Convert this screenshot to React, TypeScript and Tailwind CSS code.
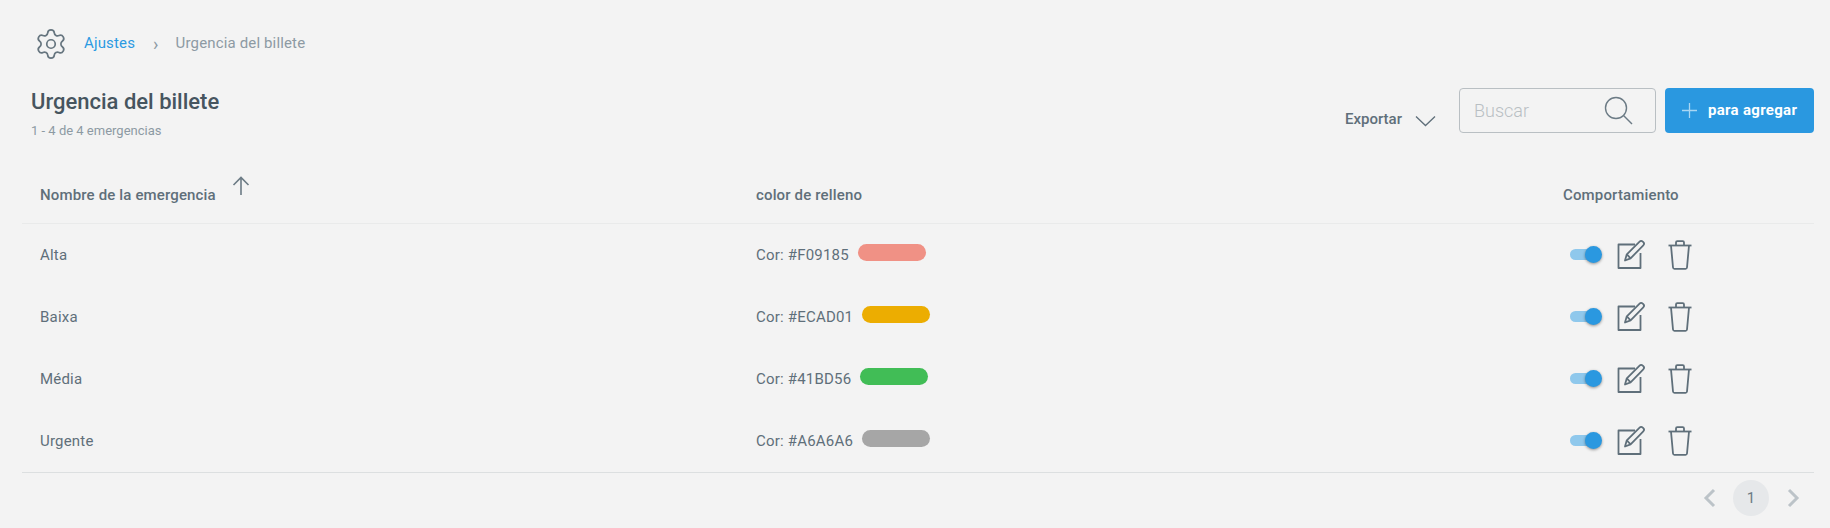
import { Settings } from "lucide-react"

const urgencias = [
  { nombre: "Alta", color: "#F09185" },
  { nombre: "Baixa", color: "#ECAD01" },
  { nombre: "Média", color: "#41BD56" },
  { nombre: "Urgente", color: "#A6A6A6" },
]

function EditIcon() {
  return (
    <svg width="30" height="30" viewBox="0 0 30 30" fill="none" stroke="#5f6f7a" strokeWidth="1.8" strokeLinejoin="round">
      <path d="M18 4.5H1.5v23.5h22V13" />
      <path d="M8 20.5l1.8-6.2L22.6 1.6c.9-.9 2.2-.9 3.1 0l.6.6c.9.9.9 2.2 0 3.1L13.6 18.3z" />
      <path d="M9.8 14.3l3.8 4" />
    </svg>
  )
}

function TrashIcon() {
  return (
    <svg width="24" height="30" viewBox="0 0 24 30" fill="none" stroke="#5f6f7a" strokeWidth="1.8" strokeLinejoin="round">
      <path d="M0.5 5.5h23" />
      <path d="M8 5.5V2.5c0-.8.5-1.3 1.3-1.3h5.4c.8 0 1.3.5 1.3 1.3v3" />
      <path d="M3 5.5l2 22c.1.8.6 1.3 1.4 1.3h11.2c.8 0 1.3-.5 1.4-1.3l2-22" />
    </svg>
  )
}

export default function App() {
  return (
    <div className="w-[1830px] h-[528px] overflow-hidden bg-[#f3f3f3] font-['Roboto',sans-serif] text-[#5f6f7a]">
      {/* Breadcrumb */}
      <div className="flex items-center h-[30px] mt-[28px] ml-[36px] pt-[1px] text-[15px] tracking-[0.15px]">
        <Settings size={34} strokeWidth={1.2} className="-mx-[2px] -my-[2px] text-[#66757f]" />
        <a className="ml-[18px] text-[#2b9ae2]">Ajustes</a>
        <span className="ml-[18px] text-[18px] text-[#8d9aa3]">›</span>
        <span className="ml-[17px] text-[#8d9aa3]">Urgencia del billete</span>
      </div>

      {/* Header */}
      <div className="flex items-start justify-between mt-[31px] ml-[31px] mr-[16px]">
        <div>
          <h1 className="text-[22px] leading-[26px] font-medium text-[#46555f]">Urgencia del billete</h1>
          <p className="mt-[8px] text-[13px] leading-[16px] text-[#8d9aa3]">1 - 4 de 4 emergencias</p>
        </div>
        <div className="flex items-start -mt-[1px]">
          <div className="flex items-center mt-[20px] text-[15px] font-medium text-[#5f6f7a]">
            Exportar
            <svg width="21" height="12" viewBox="0 0 21 12" fill="none" stroke="#5f6f7a" strokeWidth="1.3" className="ml-[13px] mt-[3px]">
              <path d="M1 1.5l9.5 9 9.5-9" />
            </svg>
          </div>
          <div className="flex items-center justify-between w-[197px] h-[45px] ml-[23px] pl-[14px] pr-[22px] border border-[#b9bfc3] rounded bg-[#f3f3f3]">
            <span className="text-[18px] font-light text-[#b9bfc3]">Buscar</span>
            <svg width="29" height="29" viewBox="0 0 29 29" fill="none" stroke="#6c7b85" strokeWidth="1.4">
              <circle cx="12" cy="12" r="10.5" />
              <path d="M19.5 19.5l8.5 8.5" />
            </svg>
          </div>
          <button className="flex items-center w-[149px] h-[45px] ml-[9px] pl-[16px] rounded bg-[#2a98e0] text-white text-[15px] tracking-[0.3px] font-bold">
            <svg width="17" height="17" viewBox="0 0 17 17" fill="none" stroke="#a9d6f3" strokeWidth="1.3">
              <path d="M8.5 1v15M1 8.5h15" />
            </svg>
            <span className="ml-[10px]">para agregar</span>
          </button>
        </div>
      </div>

      {/* Tabla */}
      <div className="ml-[22px] mr-[16px] mt-[23px] border-b border-[#dcdfe0]">
        <div className="flex items-center h-[62px] border-b border-[#e9eaea] text-[15px] tracking-[0.15px] font-medium">
          <div className="w-[716px] pl-[18px] flex items-center">
            <span className="mt-[6px]">Nombre de la emergencia</span>
            <svg width="18" height="20" viewBox="0 0 18 20" fill="none" stroke="#6c7b85" strokeWidth="1.6" className="ml-[16px] -mt-[14px]">
              <path d="M9 19V1.5M1.5 9L9 1.5 16.5 9" />
            </svg>
          </div>
          <div className="w-[807px] pl-[18px] mt-[6px]">color de relleno</div>
          <div className="pl-[18px] mt-[6px]">Comportamiento</div>
        </div>
        {urgencias.map(u => (
          <div key={u.nombre} className="flex items-center h-[62px] text-[15px] tracking-[0.2px]">
            <div className="w-[716px] pl-[18px]">{u.nombre}</div>
            <div className="w-[807px] pl-[18px] flex items-center">
              <span>Cor: {u.color}</span>
              <span className="ml-[9px] w-[68px] h-[17px] rounded-full -mt-[6px]" style={{ backgroundColor: u.color }} />
            </div>
            <div className="pl-[25px] flex items-center">
              <div className="relative w-[32px] h-[16px]">
                <div className="absolute left-0 top-[2px] w-[26px] h-[11px] rounded-full bg-[#8fc8ec]" />
                <div className="absolute right-0 top-[-1px] w-[17px] h-[17px] rounded-full bg-[#2a98e0] shadow-[0_1px_3px_rgba(0,0,0,0.4)]" />
              </div>
              <span className="ml-[15px]"><EditIcon /></span>
              <span className="ml-[21px]"><TrashIcon /></span>
            </div>
          </div>
        ))}
      </div>

      {/* Paginacion */}
      <div className="flex items-center justify-end mt-[7px] mr-[30px]">
        <svg width="13" height="20" viewBox="0 0 13 20" fill="none" stroke="#bcc3c8" strokeWidth="3">
          <path d="M11 2L3 10l8 8" />
        </svg>
        <div className="flex items-center justify-center w-[36px] h-[36px] ml-[17px] rounded-full bg-[#e6e8ea] text-[15px] text-[#6c7b85]">1</div>
        <svg width="13" height="20" viewBox="0 0 13 20" fill="none" stroke="#bcc3c8" strokeWidth="3" className="ml-[18px]">
          <path d="M2 2l8 8-8 8" />
        </svg>
      </div>
    </div>
  )
}
